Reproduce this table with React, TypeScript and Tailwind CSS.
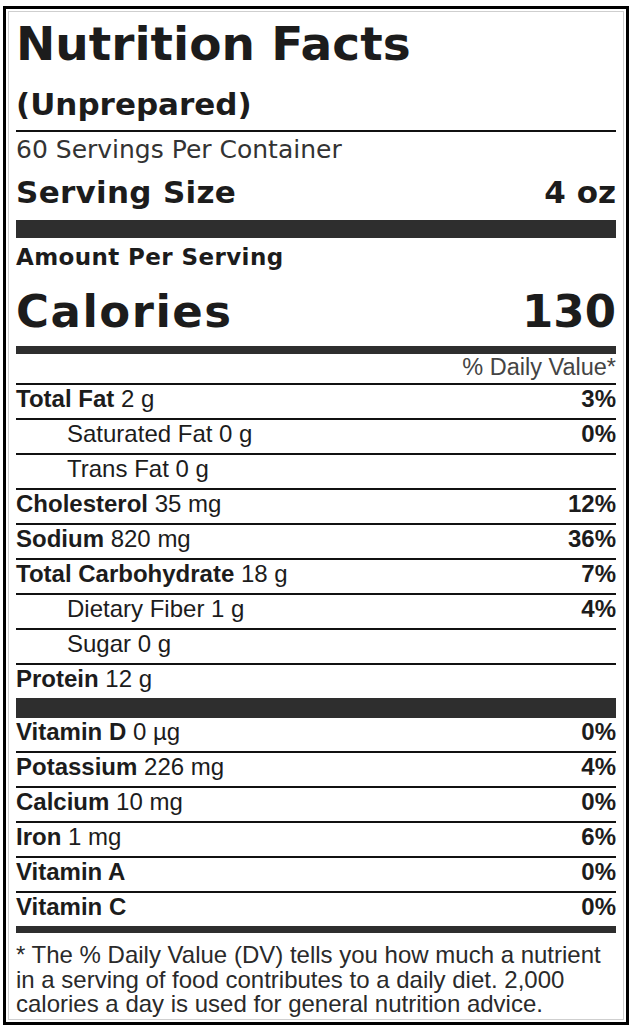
import React from "react";

type Row = {
  name: string;
  amount?: string;
  dv?: string;
  sub?: boolean;
};

const nutrients: Row[] = [
  { name: "Total Fat", amount: "2 g", dv: "3%" },
  { name: "Saturated Fat", amount: "0 g", dv: "0%", sub: true },
  { name: "Trans Fat", amount: "0 g", sub: true },
  { name: "Cholesterol", amount: "35 mg", dv: "12%" },
  { name: "Sodium", amount: "820 mg", dv: "36%" },
  { name: "Total Carbohydrate", amount: "18 g", dv: "7%" },
  { name: "Dietary Fiber", amount: "1 g", dv: "4%", sub: true },
  { name: "Sugar", amount: "0 g", sub: true },
  { name: "Protein", amount: "12 g" },
];

const vitamins: Row[] = [
  { name: "Potassium", amount: "226 mg", dv: "4%" },
  { name: "Calcium", amount: "10 mg", dv: "0%" },
  { name: "Iron", amount: "1 mg", dv: "6%" },
  { name: "Vitamin A", dv: "0%" },
  { name: "Vitamin C", dv: "0%" },
];

const heavy = "font-['DejaVu_Sans',sans-serif] font-bold";

function NutrientLine({ row, border = true }: { row: Row; border?: boolean }) {
  return (
    <div
      className={`flex justify-between leading-[28px] ${
        border ? "h-[35px] border-t-2 border-[#111]" : "h-[33px]"
      }`}
    >
      <span className={row.sub ? "pl-[51px]" : ""}>
        {row.sub ? row.name : <b>{row.name}</b>}
        {row.amount && ` ${row.amount}`}
      </span>
      {row.dv && <b>{row.dv}</b>}
    </div>
  );
}

export default function App() {
  return (
    <div className="min-h-screen bg-white pt-[6px] pl-[3px] text-[#1c1c1c]">
      <div className="w-[626px] border-[3px] border-black">
        <div className="m-[2px] border border-[#cfcfcf] px-[7px] pt-[8px] pb-[2px] font-['Liberation_Sans',Arial,sans-serif] text-[24px]">
          <h1 className={`${heavy} text-[47px] leading-[47px]`}>
            Nutrition Facts
          </h1>
          <div className="border-b-2 border-[#111] pb-[10px]">
            <p className={`${heavy} mt-[22px] text-[31px] leading-[31px]`}>
              (Unprepared)
            </p>
          </div>
          <p className="mt-[5px] font-['DejaVu_Sans',sans-serif] text-[25px] leading-[25px] text-[#333]">
            60 Servings Per Container
          </p>
          <div
            className={`${heavy} mt-[15px] flex justify-between text-[31px] leading-[31px]`}
          >
            <span className="tracking-[0.3px]">Serving Size</span>
            <span>4 oz</span>
          </div>
          <div className="mt-[12px] h-[18px] bg-[#2e2e2e]" />
          <p
            className={`${heavy} mt-[8px] text-[23px] leading-[23px] tracking-[0.4px]`}
          >
            Amount Per Serving
          </p>
          <div
            className={`${heavy} mt-[20px] flex justify-between text-[45px] leading-[45px]`}
          >
            <span className="tracking-[1.5px]">Calories</span>
            <span>130</span>
          </div>
          <div className="mt-[12px] h-[8px] bg-[#2e2e2e]" />
          <p className="mt-[2px] text-right text-[23.5px] leading-[23px] text-[#444]">
            % Daily Value*
          </p>
          <div className="mt-[4px]">
            {nutrients.map((r) => (
              <NutrientLine key={r.name} row={r} />
            ))}
          </div>
          <div className="h-[20px] bg-[#2e2e2e]" />
          <NutrientLine
            row={{ name: "Vitamin D", amount: "0 µg", dv: "0%" }}
            border={false}
          />
          {vitamins.map((r) => (
            <NutrientLine key={r.name} row={r} />
          ))}
          <div className="h-[7px] bg-[#2e2e2e]" />
          <p className="pt-[10px] leading-[24.5px] text-[#2a2a2a]">
            * The % Daily Value (DV) tells you how much a nutrient in a serving
            of food contributes to a daily diet. 2,000 calories a day is used
            for general nutrition advice.
          </p>
        </div>
      </div>
    </div>
  );
}
